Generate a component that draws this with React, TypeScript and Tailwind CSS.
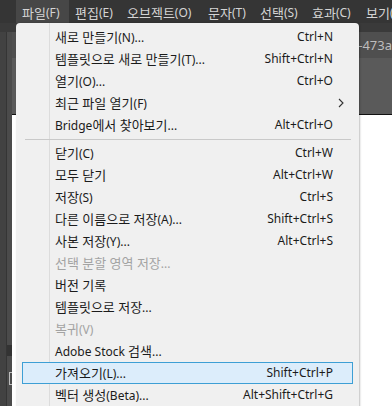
type MenuItem =
  | { sep: true }
  | { sep?: false; label: string; shortcut?: string; disabled?: boolean; submenu?: boolean; active?: boolean };

const topMenus = [
  { label: '파일(F)', w: 'w-[53px]', open: true },
  { label: '편집(E)', w: 'w-[52px]' },
  { label: '오브젝트(O)', w: 'w-[81px]' },
  { label: '문자(T)', w: 'w-[52px]' },
  { label: '선택(S)', w: 'w-[52px]' },
  { label: '효과(C)', w: 'w-[54px]' },
  { label: '보기(V)', w: 'w-[52px]' },
];

const items: MenuItem[] = [
  { label: '새로 만들기(N)...', shortcut: 'Ctrl+N' },
  { label: '템플릿으로 새로 만들기(T)...', shortcut: 'Shift+Ctrl+N' },
  { label: '열기(O)...', shortcut: 'Ctrl+O' },
  { label: '최근 파일 열기(F)', submenu: true },
  { label: 'Bridge에서 찾아보기...', shortcut: 'Alt+Ctrl+O' },
  { sep: true },
  { label: '닫기(C)', shortcut: 'Ctrl+W' },
  { label: '모두 닫기', shortcut: 'Alt+Ctrl+W' },
  { label: '저장(S)', shortcut: 'Ctrl+S' },
  { label: '다른 이름으로 저장(A)...', shortcut: 'Shift+Ctrl+S' },
  { label: '사본 저장(Y)...', shortcut: 'Alt+Ctrl+S' },
  { label: '선택 분할 영역 저장...', disabled: true },
  { label: '버전 기록' },
  { label: '템플릿으로 저장...' },
  { label: '복귀(V)', disabled: true },
  { label: 'Adobe Stock 검색...' },
  { label: '가져오기(L)...', shortcut: 'Shift+Ctrl+P', active: true },
  { label: '벡터 생성(Beta)...', shortcut: 'Alt+Shift+Ctrl+G' },
];

// hangul glyphs in the reference run a bit larger than the latin ones
function Ko({ text }: { text: string }) {
  const parts = text.split(/([\uac00-\ud7a3]+(?: [\uac00-\ud7a3]+)*)/);
  return (
    <>
      {parts.map((p, i) =>
        /[\uac00-\ud7a3]/.test(p) ? (
          <span key={i} className="text-[13px]">
            {p}
          </span>
        ) : (
          p
        )
      )}
    </>
  );
}

function Row({ item }: { item: Exclude<MenuItem, { sep: true }> }) {
  return (
    <div
      className={
        'relative mx-[6px] flex h-[22px] items-center border pl-[32px] pr-[19px] ' +
        (item.active ? 'z-10 border-[#3d9fd5] bg-[#dcedfb]' : 'border-transparent')
      }
    >
      <span className={'flex-1 whitespace-nowrap ' + (item.disabled ? 'text-[#a3a3a3]' : 'text-[#1b1b1b]')}>
        <Ko text={item.label} />
      </span>
      {item.shortcut && <span className="whitespace-nowrap text-[#1b1b1b]">{item.shortcut}</span>}
      {item.submenu && (
        <svg width="6" height="10" viewBox="0 0 6 10" className="mr-[-11px]">
          <path d="M1 1l4 4-4 4" fill="none" stroke="#333" strokeWidth="1.1" />
        </svg>
      )}
    </div>
  );
}

export default function App() {
  return (
    <div
      className="relative h-[406px] w-[392px] overflow-hidden bg-white text-[12px] leading-none"
      style={{ fontFamily: '"Noto Sans", "Noto Sans CJK KR", sans-serif' }}
    >
      {/* menu bar */}
      <div className="flex h-[23px] bg-[#353535] pl-[16px] text-[#d4d4d4]">
        {topMenus.map((m) => (
          <div
            key={m.label}
            className={'flex shrink-0 items-center whitespace-nowrap pl-[6px] pt-[3px] ' + m.w + (m.open ? ' bg-[#474747]' : '')}
          >
            <Ko text={m.label} />
          </div>
        ))}
      </div>

      {/* workspace */}
      <div className="flex h-[383px]">
        <div className="flex w-[16px] flex-col">
          <div className="h-[9px] bg-[#3a3a3a]" />
          <div className="flex flex-1">
            <div className="w-[7px] border-r border-[#353535] bg-[#424242]" />
            <div className="flex flex-1 flex-col bg-[#4b4b4b]">
              <div className="h-[313px]" />
              <div className="h-[11px] bg-[#333333]" />
              <div className="h-[16px]" />
              <div className="ml-auto h-[13px] w-[3px] border border-r-0 border-[#bdbdbd]" />
            </div>
          </div>
        </div>
        <div className="flex flex-1 flex-col">
          <div className="h-[9px] bg-[#3a3a3a]" />
          <div className="flex h-[26px] items-center overflow-hidden whitespace-nowrap bg-[#4f4f4f] pl-[346px] text-[13px] text-[#bdbdbd]">
            -473a
          </div>
          <div className="h-[57px] border-b border-[#111] bg-[#5a5a5a]" />
          <div className="flex-1 bg-white" />
        </div>
      </div>

      {/* open file menu */}
      <div className="absolute left-[16px] top-[23px] w-[343px] rounded-t-[4px] bg-[#f0f0f0] pt-[3px] pb-[4px] shadow-[1px_0_2px_rgba(0,0,0,0.25)]">
        <div className="absolute bottom-0 left-[33px] top-0 w-px bg-[#dcdcdc]" />
        {items.map((item, i) =>
          item.sep ? (
            <div key={i} className="relative flex h-[6px] items-center pl-[9px] pr-[8px]">
              <div className="h-px flex-1 bg-[#c9c9c9]" />
            </div>
          ) : (
            <Row key={i} item={item} />
          )
        )}
      </div>
    </div>
  );
}
